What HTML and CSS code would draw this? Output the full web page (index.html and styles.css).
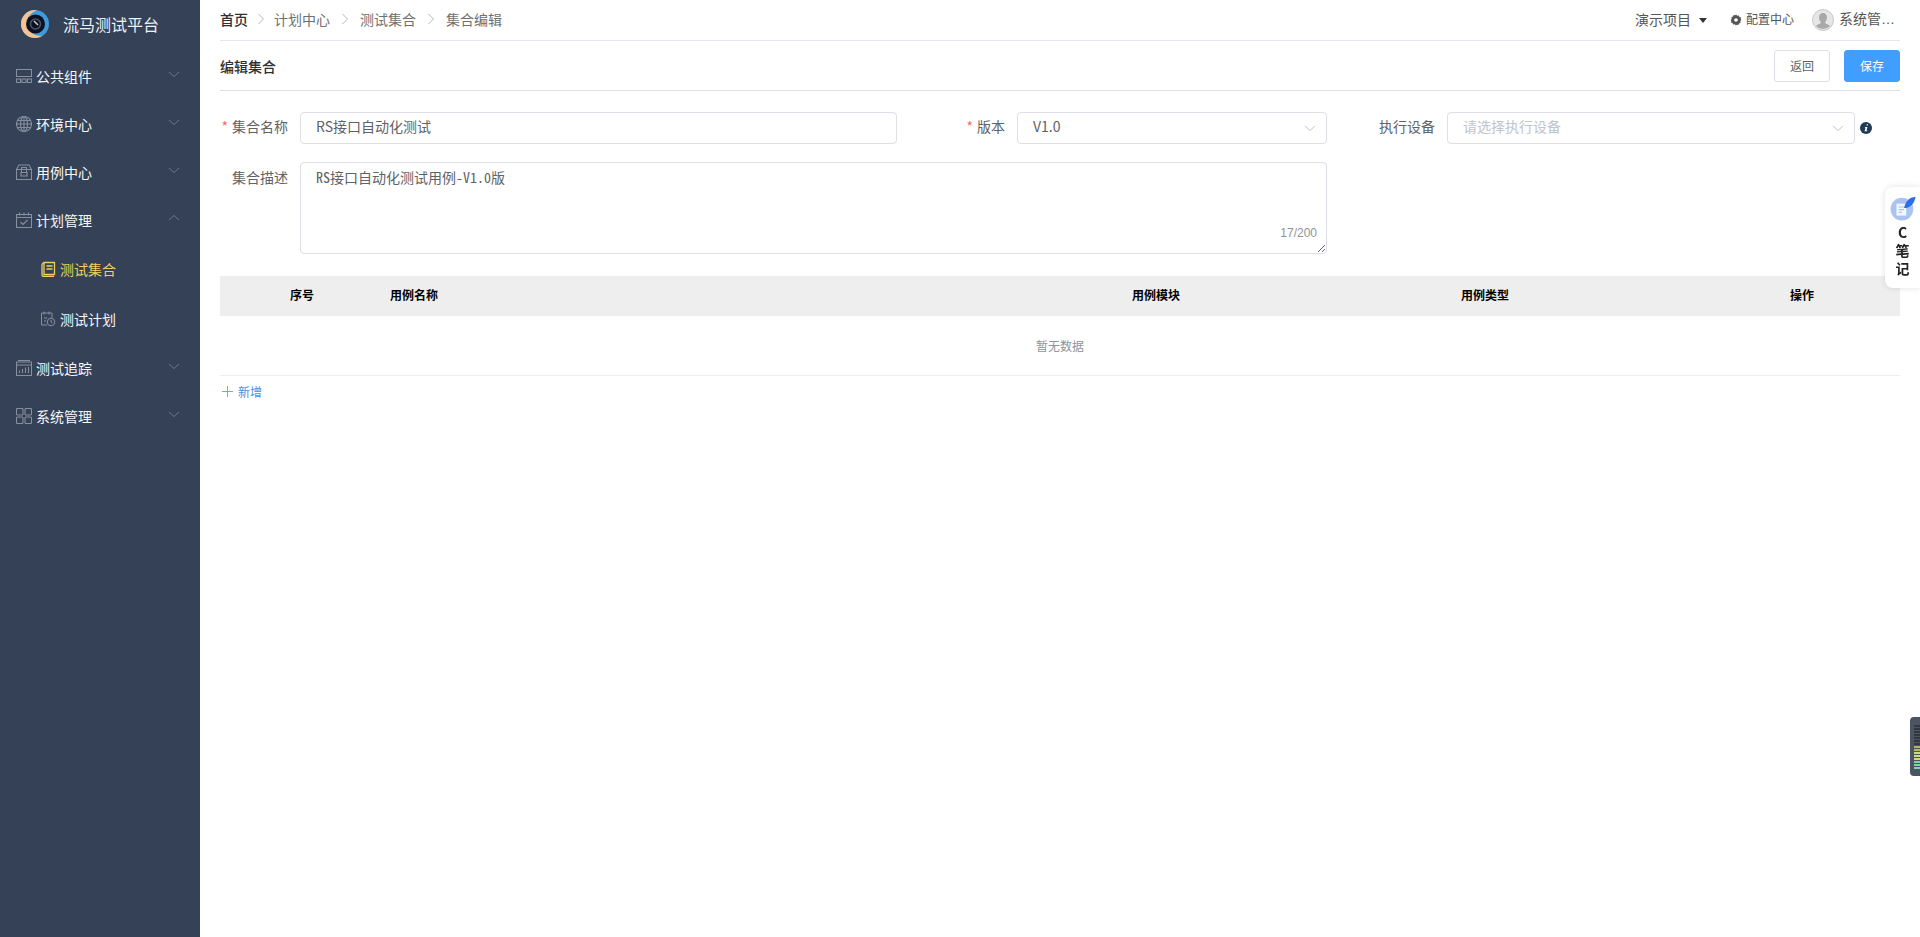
FILE: index.html
```html
<!DOCTYPE html>
<html lang="zh-CN">
<head>
<meta charset="utf-8">
<title>流马测试平台</title>
<link rel="stylesheet" href="styles.css">
</head>
<body>
<div class="app">
  <aside class="sidebar">
    <div class="brand">
      <svg class="logo" viewBox="0 0 30 30"><circle cx="15" cy="15" r="14" fill="#3f9bdc"/><path d="M15 1a14 14 0 0 0 0 28c3 0 5-1 7-2-8 0-15-4-15-12S11 4 17 1z" fill="#f6c193"/><circle cx="15.500" cy="15" r="9.500" fill="#0e1220"/><circle cx="15.500" cy="15" r="5" fill="none" stroke="#4a5568" stroke-width="1.500"/><path d="M14 12l4 4" stroke="#c9d2e0" stroke-width="1.500"/></svg>
      <span class="brand-name">流马测试平台</span>
    </div>
    <nav class="menu">
      <div class="menu-item">
        <svg class="micon" viewBox="0 0 16 16"><path d="M.5 1.500h15v7H.5zM.5 11h4v3.500h-4zM6 11h4v3.500H6zM11.500 11h4v3.500h-4z"/></svg>
        <span class="menu-text">公共组件</span>
        <svg class="chev" viewBox="0 0 12 12"><path d="M1 4l5 4.500L11 4"/></svg>
      </div>
      <div class="menu-item">
        <svg class="micon" viewBox="0 0 16 16"><circle cx="8" cy="8" r="7.500"/><ellipse cx="8" cy="8" rx="3.500" ry="7.500"/><path d="M8 .5v15M.5 8h15M1.500 4.500h13M1.500 11.500h13"/></svg>
        <span class="menu-text">环境中心</span>
        <svg class="chev" viewBox="0 0 12 12"><path d="M1 4l5 4.500L11 4"/></svg>
      </div>
      <div class="menu-item">
        <svg class="micon" viewBox="0 0 16 16"><path d="M.5 5.500h15v10H.5zM.5 5.500L3 1h10l2.500 4.500M5.500 8V3.500h5V8M5 8.500h6v3.500H5z"/></svg>
        <span class="menu-text">用例中心</span>
        <svg class="chev" viewBox="0 0 12 12"><path d="M1 4l5 4.500L11 4"/></svg>
      </div>
      <div class="menu-item">
        <svg class="micon" viewBox="0 0 16 16"><path d="M.5 2.500h15v13H.5zM.5 5.500h15M3.500.5v3M8 .5v3M12.500.5v3M4.500 10l2.500 2.500L11.500 8"/></svg>
        <span class="menu-text">计划管理</span>
        <svg class="chev" viewBox="0 0 12 12"><path d="M1 8l5-4.500L11 8"/></svg>
      </div>
      <div class="sub-item active">
        <svg class="sicon" viewBox="0 0 15 16"><path d="M3 1.500h10.500v12H3zM3 1.500C1.500 2 1 3 1 4v9.500c0 1 1 2 2 2h10M5.500 5h6M5.500 8h6"/></svg>
        <span>测试集合</span>
      </div>
      <div class="sub-item">
        <svg class="sicon" viewBox="0 0 15 16"><path d="M.5 2h10.500v5M6 14H.5V2M3 .5v3M8 .5v3M3 7h3M3 10h2"/><circle cx="10" cy="11" r="3.800"/><path d="M10 9v2l1.500 1"/></svg>
        <span>测试计划</span>
      </div>
      <div class="menu-item">
        <svg class="micon" viewBox="0 0 16 16"><path d="M.5 2h15v13.500H.5zM.5 5h15M2 .5h12M3.500 13V10.500M6.500 13V9M9.500 13V7.500M12.500 13V7"/></svg>
        <span class="menu-text">测试追踪</span>
        <svg class="chev" viewBox="0 0 12 12"><path d="M1 4l5 4.500L11 4"/></svg>
      </div>
      <div class="menu-item">
        <svg class="micon" viewBox="0 0 16 16"><rect x=".5" y=".5" width="6.500" height="6.500" rx="1"/><rect x="9" y=".5" width="6.500" height="6.500" rx="1"/><rect x=".5" y="9" width="6.500" height="6.500" rx="1"/><rect x="9" y="9" width="6.500" height="6.500" rx="1"/></svg>
        <span class="menu-text">系统管理</span>
        <svg class="chev" viewBox="0 0 12 12"><path d="M1 4l5 4.500L11 4"/></svg>
      </div>
    </nav>
  </aside>

  <main class="main">
    <header class="topbar">
      <div class="crumbs">
        <span class="crumb-home">首页</span>
        <svg class="sep sep-first" viewBox="0 0 8 12"><path d="M1.500 1l5 5-5 5"/></svg>
        <span>计划中心</span>
        <svg class="sep" viewBox="0 0 8 12"><path d="M1.500 1l5 5-5 5"/></svg>
        <span>测试集合</span>
        <svg class="sep" viewBox="0 0 8 12"><path d="M1.500 1l5 5-5 5"/></svg>
        <span>集合编辑</span>
      </div>
      <div class="top-right">
        <span class="project">演示项目</span>
        <span class="caret"></span>
        <svg class="gear" viewBox="0 0 12 12"><path fill-rule="evenodd" d="M6 .5l1.200 1.300 1.700-.4.500 1.700 1.700.5-.4 1.700L11.500 6l-1.300 1.200.4 1.700-1.700.5-.5 1.700-1.700-.4L6 11.500l-1.200-1.300-1.700.4-.5-1.700-1.700-.5.4-1.700L.5 6l1.300-1.200-.4-1.700 1.700-.5.5-1.700 1.700.4zM6 4.200a1.800 1.800 0 1 0 0 3.600 1.800 1.800 0 0 0 0-3.600z"/></svg>
        <span class="config">配置中心</span>
        <svg class="avatar" viewBox="0 0 22 22"><circle cx="11" cy="11" r="10.500" fill="#e6e6e6" stroke="#c8c8c8"/><path d="M11 4c2.500 0 4 2 4 4.500S13.500 13 13 13.500c0 1 3 1.500 5 3.500a9.500 9.500 0 0 1-14 0c2-2 5-2.500 5-3.500-.5-.5-2-2.500-2-5S8.500 4 11 4z" fill="#a9a9a9"/></svg>
        <span class="user">系统管…</span>
      </div>
    </header>

    <div class="titlebar">
      <span class="page-title">编辑集合</span>
      <div class="actions">
        <button class="btn" type="button">返回</button>
        <button class="btn primary" type="button">保存</button>
      </div>
    </div>

    <form class="form">
      <label class="label required">集合名称</label>
      <input class="input" type="text" value="RS接口自动化测试">
      <label class="label required">版本</label>
      <div class="select">
        <input class="input" type="text" value="V1.0">
        <svg class="sel-chev" viewBox="0 0 12 12"><path d="M1 4l5 4.500L11 4"/></svg>
      </div>
      <label class="label">执行设备</label>
      <div class="select">
        <input class="input" type="text" placeholder="请选择执行设备">
        <svg class="sel-chev" viewBox="0 0 12 12"><path d="M1 4l5 4.500L11 4"/></svg>
      </div>
      <svg class="info" viewBox="0 0 12 12"><circle cx="6" cy="6" r="6" fill="#1f3a56"/><path d="M6.800 2.200h1.300l-.3 1.300H6.500zM5 5h2.400l-.9 3.500h.9l-.2.800H4.600l.9-3.500h-.7z" fill="#fff"/></svg>

      <label class="label desc-label">集合描述</label>
      <div class="desc">
        <textarea class="textarea">RS接口自动化测试用例-V1.0版</textarea>
        <span class="count">17/200</span>
      </div>
    </form>

    <section class="table">
      <div class="thead">
        <div class="th index">序号</div>
        <div class="th">用例名称</div>
        <div class="th">用例模块</div>
        <div class="th">用例类型</div>
        <div class="th">操作</div>
      </div>
      <div class="empty">暂无数据</div>
    </section>
    <div class="add">
      <svg class="plus" viewBox="0 0 11 11"><path d="M5.500 0v11M0 5.500h11"/></svg>
      <span>新增</span>
    </div>
  </main>
</div>

<aside class="note">
  <svg class="note-icon" viewBox="0 0 24 24"><circle cx="11" cy="13" r="10.500" fill="#a9c4f2"/><path d="M6 8h9v11H6z" fill="#f4f7fc"/><path d="M8 11h5M8 13.500h5M8 16h3" stroke="#a9c4f2"/><path d="M13 12C14 6 18 2 23.500 1.500 23 7 19 12 13 12z" fill="#2a6fe8"/></svg>
  <span class="note-text">C</span>
  <span class="note-text">笔</span>
  <span class="note-text">记</span>
</aside>

<aside class="meter">
  <span class="off"></span><span class="off"></span><span class="off"></span><span class="off"></span><span class="off"></span><span class="off"></span><span class="off"></span>
  <span class="warm"></span><span class="warm"></span>
  <span class="lime"></span><span class="lime"></span><span class="lime"></span>
  <span class="mint"></span><span class="mint"></span><span class="mint"></span>
</aside>
</body>
</html>
```
FILE: styles.css
```css
* { box-sizing: border-box; }
html, body { margin: 0; height: 100%; overflow: hidden; background: #fff; }
body { font-family: "Noto Sans CJK SC", "Liberation Sans", sans-serif; font-size: 14px; color: #606266; }
svg { display: block; flex: none; }

.app { display: flex; height: 937px; }

.sidebar { width: 200px; flex: none; background: #344157; color: #fff; }
.brand { display: flex; align-items: center; height: 51px; padding-left: 20px; }
.logo { width: 30px; height: 30px; margin-right: 13px; margin-top: -3px; }
.brand-name { font-size: 16px; color: #eef2f7; line-height: 22px; padding-bottom: 3px; }

.menu { display: flex; flex-direction: column; padding-top: 1px; }
.menu-item { display: flex; align-items: center; height: 48px; padding-left: 16px; padding-right: 20px; }
.micon { width: 16px; height: 16px; margin-right: 4px; fill: none; stroke: #868f9d; stroke-width: 1.100; }
.menu-text { flex: 1; color: #f4f6f9; line-height: 20px; }
.chev { width: 12px; height: 12px; margin-top: -5px; fill: none; stroke: #6d7887; stroke-width: 1; }

.sub-item { display: flex; align-items: center; height: 50px; padding-left: 41px; color: #f4f6f9; }
.sicon { width: 15px; height: 16px; margin-right: 4px; fill: none; stroke: #868f9d; stroke-width: 1; }
.sub-item.active { color: #f0cf5a; }
.sub-item.active .sicon { stroke: #f0cf5a; stroke-width: 1.300; }

.main { flex: 1; min-width: 0; padding: 0 20px; }

.topbar { display: flex; align-items: center; justify-content: space-between; height: 41px; border-bottom: 1px solid #e4e7ed; }
.crumbs { display: flex; align-items: center; color: #707070; line-height: 20px; padding-bottom: 2px; }
.crumb-home { color: #303133; font-weight: 500; }
.sep { width: 8px; height: 12px; margin: 0 11px; fill: none; stroke: #b4b8be; stroke-width: 1; }
.sep-first { margin: 0 9px; }
.top-right { display: flex; align-items: center; color: #555; }
.project { line-height: 20px; padding-bottom: 2px; }
.caret { width: 0; height: 0; border: 4.500px solid transparent; border-top: 5px solid #333; border-bottom: 0; margin: 0 0 0 8px; }
.gear { width: 12px; height: 12px; margin-left: 23px; margin-bottom: 1px; fill: #555; }
.config { font-size: 12px; margin-left: 4px; line-height: 20px; padding-bottom: 2px; }
.avatar { width: 22px; height: 22px; margin-left: 18px; margin-bottom: 1px; }
.user { margin-left: 5px; margin-right: 5px; line-height: 20px; padding-bottom: 2px; white-space: nowrap; font-family: "Liberation Sans", "Noto Sans CJK SC", sans-serif; }

.titlebar { display: flex; align-items: center; justify-content: space-between; height: 50px; border-bottom: 1px solid #dcdfe6; }
.page-title { color: #303133; font-weight: 500; line-height: 20px; }
.actions { display: flex; gap: 14px; }
.btn { width: 56px; height: 32px; padding: 0; font: inherit; font-size: 12px; color: #606266; background: #fff; border: 1px solid #dcdfe6; border-radius: 3px; }
.btn.primary { color: #fff; background: #409eff; border-color: #409eff; }

.form { display: grid; grid-template-columns: 80px 597px 120px 310px 120px 408px 18px; row-gap: 18px; margin-top: 21px; align-items: center; }
.label { text-align: right; padding-right: 12px; padding-bottom: 4px; line-height: 20px; color: #606266; }
.required::before { content: "*"; color: #f56c6c; margin-right: 4px; }
.input { display: block; width: 100%; height: 32px; padding: 0 15px 4px; font: inherit; font-size: 14px; line-height: 26px; color: #606266; background: #fff; border: 1px solid #dcdfe6; border-radius: 4px; outline: none; }
.input::placeholder { color: #c0c4cc; }
.select { position: relative; }
.sel-chev { position: absolute; top: 10px; right: 11px; width: 12px; height: 12px; fill: none; stroke: #c0c4cc; stroke-width: 1; }
.info { width: 12px; height: 12px; margin-left: 5px; }

.desc-label { align-self: start; padding-top: 5px; padding-bottom: 0; }
.desc { position: relative; grid-column: 2 / 5; height: 92px; }
.textarea { display: block; width: 100%; height: 92px; padding: 4px 15px; font-family: "Noto Sans Mono CJK SC", "Liberation Mono", "Noto Sans CJK SC", monospace; font-size: 14px; line-height: 20px; color: #606266; background: #fff; border: 1px solid #dcdfe6; border-radius: 4px; outline: none; resize: vertical; }
.count { position: absolute; right: 10px; bottom: 14px; font-family: "Liberation Sans", sans-serif; font-size: 12px; line-height: 14px; color: #909399; }

.table { margin-top: 22px; }
.thead { display: grid; grid-template-columns: 164px 742px 329px 329px 116px; align-items: center; height: 40px; padding-bottom: 3px; background: #eeeeee; }
.th { padding-left: 6px; font-size: 12px; font-weight: 700; color: #000; line-height: 16px; }
.th.index { padding: 0; text-align: center; }
.empty { display: flex; align-items: center; justify-content: center; height: 60px; font-size: 12px; color: #909399; border-bottom: 1px solid #ebeef5; }

.add { display: flex; align-items: center; gap: 5px; height: 30px; padding-left: 2px; font-size: 12px; color: #4a90e2; }
.plus { width: 11px; height: 11px; fill: none; stroke: #7aa7d8; stroke-width: 1; }

.note { position: fixed; top: 187px; right: 0; width: 35px; height: 101px; display: flex; flex-direction: column; align-items: center; background: #fff; border-radius: 8px 0 0 8px; box-shadow: 0 0 6px rgba(0, 0, 0, .12); padding: 8px 0 0; }
.note-icon { width: 26px; height: 26px; margin-bottom: 2px; }
.note-text { font-size: 14px; font-weight: 700; line-height: 18px; color: #222; }

.meter { position: fixed; top: 717px; right: 0; width: 10px; height: 59px; display: flex; flex-direction: column; justify-content: center; gap: 1px; padding-left: 4px; background: #4c5362; border-radius: 4px 0 0 4px; }
.meter span { display: block; height: 2px; width: 6px; }
.meter .off { background: #33383f; }
.meter .warm { background: #b5b36c; }
.meter .lime { background: #c7dc7e; }
.meter .mint { background: #7fd3a4; }
```
